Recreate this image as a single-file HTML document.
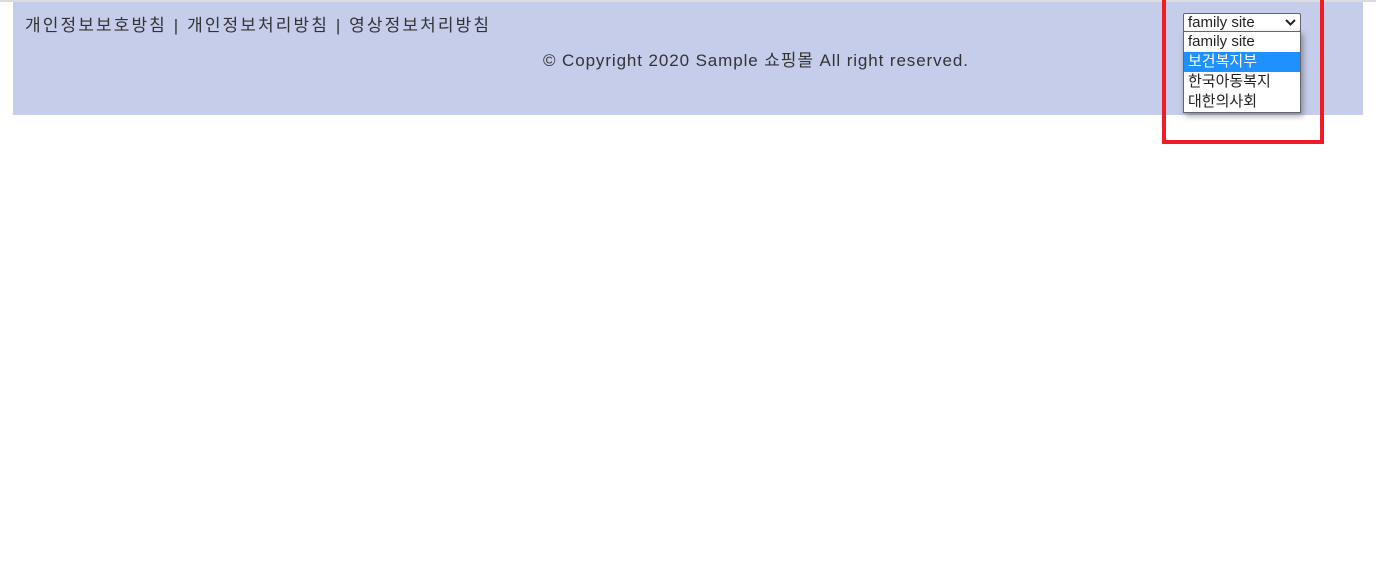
<!DOCTYPE html>
<html><head><meta charset="utf-8"><style>
body{margin:0;width:1376px;height:566px;background:#fff;position:relative;overflow:hidden;font-family:"Liberation Sans","Noto Sans CJK KR",sans-serif;}
.top{position:absolute;left:0;top:0;width:1376px;height:2px;background:#dcdcdc}
.band{position:absolute;left:13px;top:2px;width:1350px;height:113px;background:#c6cdea}
.links{position:absolute;left:25px;top:15px;font-size:17px;letter-spacing:2.1px;color:#333;line-height:22px;white-space:nowrap}
.copy{position:absolute;left:543px;top:50px;font-size:17px;letter-spacing:0.9px;color:#333;line-height:22px;white-space:nowrap}
.red{position:absolute;left:1162px;top:-4px;width:154px;height:140px;border:4px solid #ee1c25}
.sel{position:absolute;left:1183px;top:13px;height:17px;border:1px solid #666;border-radius:2px;background:#fff;font-size:15px;line-height:17px;color:#222;padding-left:4px;width:112px}
.sel svg{position:absolute;right:4px;top:5px}
.list{position:absolute;left:1183px;top:31px;width:116px;border:1px solid #666;background:#fff;box-shadow:2px 3px 6px rgba(0,0,0,.35);font-size:15px;color:#222}
.list div{height:20px;line-height:20px;padding-left:4px;white-space:nowrap}
.list .hl{background:#1e90ff;color:#fff}
</style></head><body>
<div class="top"></div>
<div class="band"></div>
<div class="links">개인정보보호방침 | 개인정보처리방침 | 영상정보처리방침</div>
<div class="copy">© Copyright 2020 Sample 쇼핑몰 All right reserved.</div>
<div class="red"></div>
<div class="sel">family site<svg width="11" height="7" viewBox="0 0 11 7"><path d="M1 1l4.5 4.5L10 1" stroke="#222" stroke-width="2" fill="none"/></svg></div>
<div class="list"><div>family site</div><div class="hl">보건복지부</div><div>한국아동복지</div><div>대한의사회</div></div>
</body></html>
